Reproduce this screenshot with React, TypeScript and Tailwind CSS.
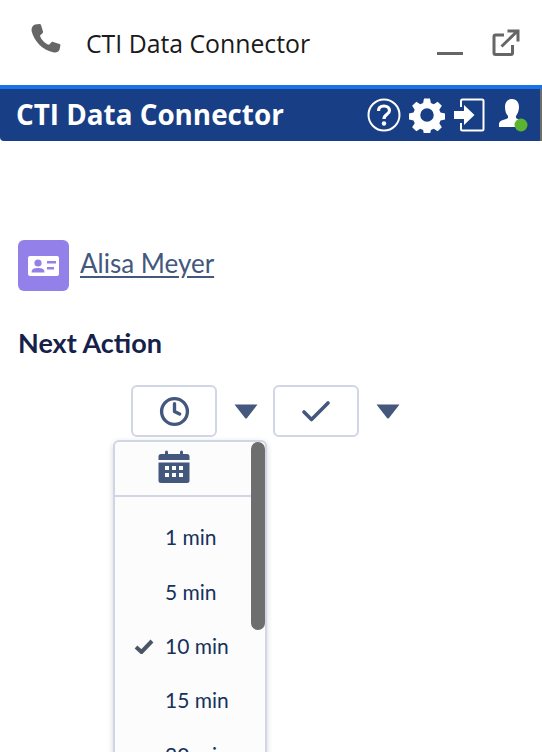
import { Check, Clock } from "lucide-react";

function Caret() {
  return (
    <svg width="24" height="15" viewBox="0 0 24 15" className="block shrink-0">
      <path d="M0.5 0.5 H23.5 L13 14 Q12 15 11 14 Z" fill="#44577d" />
    </svg>
  );
}

const minutes = ["1 min", "5 min", "10 min", "15 min", "20 min"];

export default function App() {
  return (
    <div className="h-[752px] w-[542px] overflow-hidden bg-white font-['Lato',sans-serif]">
      <div className="flex h-[85px] items-center pl-[30px] pr-[22px] font-['Open_Sans',sans-serif]">
        <svg width="32" height="32" viewBox="0 0 32 32" className="mb-[8px]">
          <path
            d="M5 1.5 L9.5 1 C10.3 1 10.8 1.4 11 2 L13 8.5 C13.2 9.2 13 9.7 12.5 10.2 L10 12.5 C11 16.5 14.5 20.3 19 21.8 L21.5 19.3 C22 18.8 22.6 18.7 23.2 18.9 L29.5 21 C30.2 21.3 30.5 21.8 30.4 22.5 L29.6 26.5 C28.8 28.5 26.5 30 24 29.5 C12 27.5 3.8 17 1.6 8 C1.2 5 2.5 2.5 5 1.5 Z"
            fill="#666666"
          />
        </svg>
        <span className="ml-[24px] mt-[2px] text-[24.8px] text-[#1a1a1a]">CTI Data Connector</span>
        <div className="ml-auto flex items-center gap-[29px]">
          <div className="mt-[22px] h-[3px] w-[26px] bg-[#666666]" />
          <svg width="28" height="28" viewBox="0 0 28 28" fill="none" stroke="#666666" strokeWidth="3">
            <path d="M12 6 H3.5 A1.5 1.5 0 0 0 2 7.5 V24 A1.5 1.5 0 0 0 3.5 25.5 H19 A1.5 1.5 0 0 0 20.5 24 V16" />
            <path d="M9.5 17.5 L25 2.5 M15.5 2 H26 V12.5" />
          </svg>
        </div>
      </div>

      <div className="h-[4px] bg-[#1a73e8]" />
      <div className="flex h-[52px] items-center rounded-bl-[4px] border-r-2 border-[#6e6e6e] bg-[#183e85] pl-[16px] pr-[11px]">
        <span className="text-[27.8px] font-bold text-white font-['Open_Sans',sans-serif]">CTI Data Connector</span>
        <div className="ml-auto flex items-center gap-[8px]">
          <svg width="34" height="34" viewBox="0 0 34 34" fill="none">
            <circle cx="17" cy="17" r="15.5" stroke="#fff" strokeWidth="2" />
            <path d="M11.5 13 C11.5 9.5 14 8 17 8 C20 8 22.5 9.8 22.5 12.6 C22.5 16.4 17 16.4 17 21" stroke="#fff" strokeWidth="3.2" />
            <circle cx="17" cy="25.5" r="2.2" fill="#fff" />
          </svg>
          <svg width="36" height="36" viewBox="0 0 24 24" fill="#fff">
            <path
              fillRule="evenodd"
              d="M10 1h4l.6 3 1.9.8 2.6-1.7 2.8 2.8-1.7 2.6.8 1.9 3 .6v4l-3 .6-.8 1.9 1.7 2.6-2.8 2.8-2.6-1.7-1.9.8-.6 3h-4l-.6-3-1.9-.8-2.6 1.7-2.8-2.8 1.7-2.6-.8-1.9-3-.6v-4l3-.6.8-1.9-1.7-2.6 2.8-2.8 2.6 1.7 1.9-.8zM12 7.5a4.5 4.5 0 1 0 0 9 4.5 4.5 0 0 0 0-9z"
            />
          </svg>
          <svg width="32" height="34" viewBox="0 0 32 34" fill="none">
            <path d="M8 9 V3 A1.5 1.5 0 0 1 9.5 1.5 H29 A1.5 1.5 0 0 1 30.5 3 V31 A1.5 1.5 0 0 1 29 32.5 H9.5 A1.5 1.5 0 0 1 8 31 V25" stroke="#fff" strokeWidth="2" />
            <path d="M1 13 H11 V7 L21.5 17 L11 27 V21 H1 Z" fill="#fff" />
          </svg>
          <svg width="32" height="36" viewBox="0 0 32 36" className="ml-[4px]">
            <path d="M15 2 C20 2 22 6 22 10 C22 14 20.5 17 19 19 V21 C22 23 27 23 27 28 V30 H2 V27 C2 23 8 23 11 21 V19 C9 17 8 14 8 10 C8 6 10 2 15 2 Z" fill="#fff" />
            <circle cx="24" cy="28" r="6.5" fill="#5cb531" />
          </svg>
        </div>
      </div>

      <div className="px-[18px] pt-[99px]">
        <div className="flex items-center gap-[11px]">
          <div className="flex h-[51px] w-[51px] items-center justify-center rounded-[6px] bg-[#9480e9]">
            <svg width="31" height="20" viewBox="0 0 31 20">
              <rect width="31" height="20" rx="2" fill="#fff" />
              <circle cx="10" cy="7" r="3.6" fill="#9480e9" />
              <path d="M3.5 16.5 C3.5 12.5 7 12 10 12 C13 12 16.5 12.5 16.5 16.5 Z" fill="#9480e9" />
              <rect x="19" y="5" width="9" height="2.5" fill="#9480e9" />
              <rect x="19" y="11" width="7" height="2.5" fill="#9480e9" />
            </svg>
          </div>
          <a className="mb-[6px] text-[26px] leading-[32px] text-[#44577d] underline underline-offset-[3px]">Alisa Meyer</a>
        </div>

        <h2 className="mt-[35px] text-[27px] font-bold leading-[34px] text-[#16214a]">Next Action</h2>

        <div className="relative ml-[113px] mt-[25px] flex items-center">
          <button className="flex h-[52px] w-[86px] shrink-0 items-center justify-center rounded-[6px] border-2 border-[#d0d6e4] bg-white">
            <Clock size={31} strokeWidth={2.6} color="#44577d" />
          </button>
          <span className="ml-[17px]"><Caret /></span>
          <button className="ml-[15px] flex h-[52px] w-[86px] shrink-0 items-center justify-center rounded-[6px] border-2 border-[#d0d6e4] bg-white">
            <Check size={36} strokeWidth={2.4} color="#44577d" className="mt-[1px]" />
          </button>
          <span className="ml-[17px]"><Caret /></span>

          <div className="absolute left-[-18px] top-[55px] h-[340px] w-[154px] overflow-hidden rounded-[6px] border-2 border-[#d0d6e4] bg-[#fcfcfc] shadow-[0_2px_6px_rgba(0,0,0,0.16)]">
            <div className="flex h-[55px] justify-center border-b-2 border-[#d0d6e4] pr-[33px] pt-[8px]">
              <svg width="32" height="34" viewBox="0 0 32 34" fill="#44577d">
                <path
                  fillRule="evenodd"
                  d="M0.5 10 V6.5 A2.5 2.5 0 0 1 3 4 H7 V2 A1.5 1.5 0 0 1 10 2 V4 H22 V2 A1.5 1.5 0 0 1 25 2 V4 H29 A2.5 2.5 0 0 1 31.5 6.5 V10 Z M0.5 12.5 H31.5 V30.5 A2.5 2.5 0 0 1 29 33 H3 A2.5 2.5 0 0 1 0.5 30.5 Z M7 16 V20 H11 V16 Z M14 16 V20 H18 V16 Z M21 16 V20 H25 V16 Z M7 23 V27 H11 V23 Z M14 23 V27 H18 V23 Z M21 23 V27 H25 V23 Z"
                />
              </svg>
            </div>
            <div className="pt-[13px]">
              {minutes.map((m) => (
                <div key={m} className="relative flex h-[54.3px] items-center pl-[50px] text-[21px] text-[#16325c]">
                  {m === "10 min" && (
                    <svg width="20" height="16" viewBox="0 0 20 16" className="absolute left-[19px] top-[19px]">
                      <path d="M2 9 L7.5 14 L18 3" fill="none" stroke="#4a5568" strokeWidth="4" />
                    </svg>
                  )}
                  {m}
                </div>
              ))}
            </div>
            <div className="absolute right-0 top-0 h-[188px] w-[14px] rounded-[7px] bg-[#6e6e6e]" />
          </div>
        </div>
      </div>
    </div>
  );
}
